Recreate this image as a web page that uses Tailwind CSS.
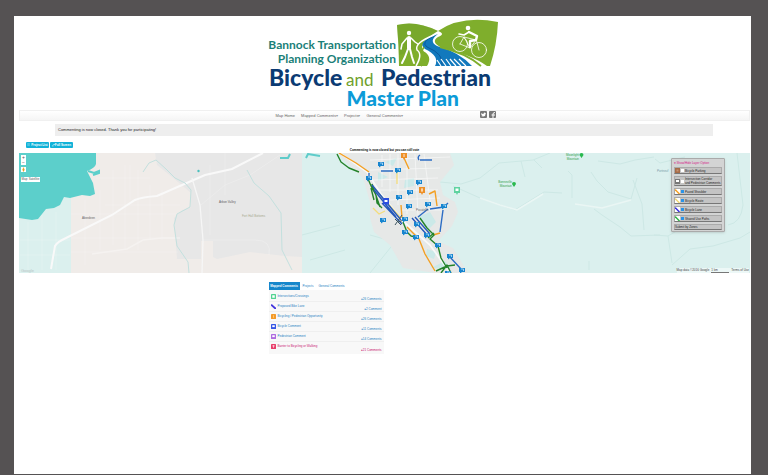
<!DOCTYPE html>
<html lang="en">

<head>
    <meta charset="utf-8">
    <meta name="viewport" content="width=device-width, initial-scale=1">
    <title>Bicycle and Pedestrian Master Plan</title>
    <script src="https://cdn.jsdelivr.net/npm/@tailwindcss/browser@4"></script>
</head>

<body class="min-h-screen flex flex-col bg-[#555253] pt-4 pl-[14px] pr-[17px] pb-px font-['Liberation_Sans',Arial,sans-serif] text-[#444]">
    <div class="grow bg-white px-[5px] pr-px">
        <!-- Logo -->
        <header class="flex justify-center pt-[2px] pr-px">
            <a href="#" aria-label="Bicycle and Pedestrian Master Plan">
                <svg class="w-[236px] h-[92px]" viewBox="266 18 236 92" font-family="Lato,'Open Sans',sans-serif">
                    <path d="M397 25Q416 20 438 31Q462 15 498 22Q497 45 490 66H399Q399 45 397 25Z" fill="#7fae2c" />
                    <path d="M397 25Q416 20 438 31Q424 38 412 52L399 55Z" fill="#6f9f2b" opacity=".4" />
                    <!-- river and paths -->
                    <path d="M438 31Q446 34 438 37Q430 42 442 48Q472 55 487 66H427Q433 56 423 51Q418 43 438 31Z" fill="#fff" />
                    <path d="M438 34Q416 42 425 49Q440 56 435 66H472Q459 52 437 46Q428 41 438 34Z" fill="#1279bd" />
                    <path d="M434 36Q420 42 427 47Q444 54 442 65" fill="none" stroke="#0c5a9d" />
                    <path d="M441 66L437 60M446 66L441 59M451 66L446 59M456 66L450 59M461 66L454 59M466 66L459 59" stroke="#fff" stroke-width="1.2" />
                    <path d="M440 47Q466 53 481 66M424 47Q420 52 426 55Q427 60 421 66" fill="none" stroke="#7fae2c" stroke-width="1.8" />
                    <path d="M434 35Q414 43 417 50Q423 54 416 66" fill="none" stroke="#fff" stroke-width="1.5" />
                    <!-- walker -->
                    <g fill="none" stroke="#fff" stroke-linecap="round" stroke-linejoin="round">
                        <circle cx="409" cy="33" r="2.2" fill="#fff" stroke="none" />
                        <path d="M409 38L409 48" stroke-width="4" />
                        <path d="M407 38L402 44L401 49M411 38L415 42L418 44" stroke-width="1.5" />
                        <path d="M408 49L405 57L402 63M410 49L412 57L414 63" stroke-width="2" />
                    </g>
                    <!-- cyclist -->
                    <g fill="none" stroke="#fff" stroke-linecap="round" stroke-linejoin="round">
                        <circle cx="460" cy="44" r="7.5" stroke-width=".8" />
                        <circle cx="479" cy="50" r="7.5" stroke-width=".8" />
                        <path d="M460 44L464 37L476 40L470 48L460 44M464 37L470 48M476 39L479 50" stroke-width=".8" />
                        <circle cx="468" cy="28" r="2.3" fill="#fff" stroke="none" />
                        <path d="M469 32L477 36L476 40L470 41L470 47" stroke-width="2.4" />
                        <path d="M469 32L464 35L459 34" stroke-width="1.6" />
                    </g>
                    <g fill="#1b7f78" font-size="12" font-weight="700" text-anchor="end">
                        <text x="396" y="49">Bannock Transportation</text>
                        <text x="396" y="63">Planning Organization</text>
                    </g>
                    <g font-weight="900">
                        <text x="269" y="86" fill="#0b3b73" font-size="23">Bicycle</text>
                        <text x="346" y="86" fill="#6fa02c" font-size="17" font-weight="400">and</text>
                        <text x="491" y="86" fill="#0b3b73" text-anchor="end" font-size="23">Pedestrian</text>
                        <text x="459" y="106" fill="#0c9bd8" text-anchor="end" font-size="21">Master Plan</text>
                    </g>
                </svg>
            </a>
        </header>

        <!-- Main nav -->
        <nav class="flex justify-center h-[11px] border border-[#f0f0f0] bg-linear-to-b from-white to-[#f5f5f5] text-[4px] leading-[9px] text-[#666]">
            <div class="w-[222px] pl-[2px] flex gap-[6px] items-center">
                <a href="#">Map Home</a>
                <a href="#">Mapped Comments<span class="text-[#999]">▾</span></a>
                <a href="#">Projects<span class="text-[#999]">▾</span></a>
                <a href="#">General Comments<span class="text-[#999]">▾</span></a>
                <div class="ml-auto flex gap-[2px] -mt-[3px]">
                    <a href="#" aria-label="Twitter">
                        <svg class="size-[7px]" viewBox="0 0 14 14"><rect width="14" height="14" rx="2" fill="#777" /><path d="M2 4Q4 6 7 6Q7 3 9 3L11 4L12 4L11 6Q11 11 6 11L2 10L5 9L3 8Z" fill="#fff" /></svg>
                    </a>
                    <a href="#" aria-label="Facebook">
                        <svg class="size-[7px]" viewBox="0 0 14 14"><rect width="14" height="14" rx="2" fill="#777" /><path d="M8 14V6Q8 3 12 3M5 8H12" fill="none" stroke="#fff" stroke-width="2" /></svg>
                    </a>
                </div>
            </div>
        </nav>

        <p class="mt-[3px] ml-9 mr-[37px] h-3 px-[3px] bg-[#eee] text-[4px] leading-3 text-[#222]">Commenting is now closed. Thank you for participating!</p>

        <div class="mt-[6px] ml-[7px] flex gap-px text-[3px] leading-[6px] font-bold text-white">
            <button class="w-[23px] h-[6px] rounded-[1px] bg-[#11b2d8]">☷ Project List</button>
            <button class="w-[23px] h-[6px] rounded-[1px] bg-[#11b2d8]">⤢ Full Screen</button>
        </div>
        <p class="h-[5px] text-center text-[3px] leading-[5px] font-bold text-black">Commenting is now closed but you can still vote</p>

        <!-- Map -->
        <section class="relative h-[120px] overflow-hidden bg-[#dbf0ee]">
            <svg class="w-full h-full" viewBox="19 153 731 120" preserveAspectRatio="xMidYMid slice" font-family="'Liberation Sans',Arial,sans-serif">
                <defs>
                    <g id="pin">
                        <path d="M-3-2H3V2H0L-2 3.500V2H-3Z" fill="#1785cf" />
                        <path d="M-1 -1H1.500V1" fill="none" stroke="#bfe1f7" stroke-width=".8" />
                    </g>
                </defs>
                <rect x="71" y="153" width="231" height="120" fill="#f0ece9" />
                <path d="M19 153H96V197L71 205L19 218Z" fill="#f0ece9" />
                <path d="M155 153H302V257L285 256L250 252L217 259L213 257V241H201V259H194L177 259L174 218L182 210L191 207V193L172 177L157 165Z" fill="#e7e7e7" />
                <path d="M71 190V273H19V210Z" fill="#dbf0ee" />
                <path d="M19 153H96V164Q95 168 87 171L93 183L95 194L90 196L82 195L70 198L64 197L60 205L54 208L46 209L38 219L32 220L19 218Z" fill="#5ccfcb" />
                <path d="M88 171L94 173L99 171L99 173L93 175" fill="none" stroke="#5ccfcb" stroke-width="2" />
                <!-- streets -->
                <g fill="none" stroke="#fff" opacity=".35" stroke-width=".6">
                    <path d="M71 214H176M71 238H175M71 252H178M100 190V250M113 170V245M125 165V250M138 170V250M150 185V240M162 190V240M85 200V265M105 205H180M96 178H150M130 165V200M204 240H255Q272 240 269 255M201 205L225 185L250 175L280 155M225 153V195M210 165V235" />
                    <path d="M20 240H70M28 222V270M42 215V270M56 212V270M20 255H70" />
                    <path d="M143 240L162 238H180M92 254L127 249L143 240" stroke-width="1.500" />
                </g>
                <path d="M51 269L55 246Q57 242 66 238L112 215L135 200Q142 197 157 196L205 175L232 169L263 153" fill="none" stroke="#f9f9f9" stroke-width="2" />
                <path d="M192 178L200 205L203 240L202 273" fill="none" stroke="#f6f6f6" stroke-width="1.300" />
                <!-- rivers -->
                <g fill="none" stroke="#c3e0de" stroke-width="1">
                    <path d="M143 172L149 163L156 160L166 169L175 178L185 183L191 190L190 207L177 214L174 225L177 246L188 262L189 273" />
                    <path d="M247 170L254 183L269 196L281 213L282 250L292 270" />
                </g>
                <path d="M280 158H288L290 154M306 158L308 154L320 156" fill="none" stroke="#5fccca" stroke-width="2" />
                <circle cx="198.500" cy="171" r="1.200" fill="#4cc0bd" />
                <!-- hills -->
                <g fill="none" stroke="#cde8e5" stroke-width="1">
                    <path d="M440 182L461 184L480 178L499 163L533 160L550 153M521 161L525 177M534 160L542 168M568 171L572 175V198M598 161L620 164L635 160L654 157M591 172L597 181L608 192L631 199L637 178M594 209L602 215L620 227L631 236L660 235M453 186L480 198L515 210L544 192L562 193" />
                    <path d="M633 180L642 204L644 230M654 235L668 236L672 263M668 236L685 226L725 222M690 249L713 246L740 238L750 232M672 265L690 249M737 153L743 205Q741 223 728 225M589 270V261M370 273L395 242L370 235M302 235L340 225M310 260L345 250M655 159L660 163L685 157" />
                </g>
                <path d="M480 198L500 205L517 210L543 194M575 204L602 208L631 200" fill="none" stroke="#eaf6f4" stroke-width="1.500" />
                <!-- city -->
                <path d="M338 153H450L454 165L440 182L443 195L455 202L458 212L452 226L438 241L453 248L468 273H435L403 268L390 245L374 232L370 218V202L363 178L342 158Z" fill="#e6e8e7" />
                <path d="M418 217L430 212L436 222L428 230ZM427 249L436 252L434 259L426 256ZM431 268L445 261L451 269ZM405 180L414 178L414 186L404 188ZM378 172L388 177L378 181ZM385 162L397 158L393 166Z" fill="#cbe9e8" />
                <g fill="none" stroke="#fff" stroke-width=".7" opacity=".75">
                    <path d="M370 160L450 157M370 170L440 168M373 180L438 178M378 190L438 190M390 200L440 198M402 210L443 210M382 155V187M390 154V192M398 154V205M407 154V214M415 154L418 215M424 154L431 208" />
                    <path d="M340 153L367 172L381 194L404 222L430 245L450 273" stroke-width="1.800" />
                </g>
                <path d="M397 172V184M372 186L400 217M373 208L379 214L385 211" fill="none" stroke="#f4dc7b" stroke-width="1.300" />
                <!-- bike routes -->
                <g fill="none" stroke-width="1.400" stroke-linejoin="round">
                    <path d="M339 153L356 163L369 172M404 158L409 169M429 194L435 191L437 206M407 227L419 239L425 254L435 271M401 205L402 218M433 235L440 233" stroke="#f3a024" />
                    <path d="M337 154L341 162L349 168L359 172M368 179L372 188L376 195L377 203L382 208M371 188L374 200M372 184L380 207M403 222L407 232L411 236L416 237M420 218L427 228L434 235L430 239L438 246L441 258L447 268M436 271L447 266L455 265M441 273L447 265L451 273M428 238L434 233" stroke="#24832b" />
                    <path d="M381 171H393M420 160H432M369 173L369 180M418 217L428 209M430 209L444 207L448 203M443 210L440 232M449 256L461 269" stroke="#2c6cc4" />
                    <path d="M372 185L401 220M382 203L402 224M374 190L396 217M412 218L428 236M415 217L430 234" stroke="#2458ba" />
                    <path d="M420 155Q417 157 419 160" stroke="#2c6cc4" />
                    <path d="M395 219L401 225M395 225L402 215M398 222L404 220" stroke="#3b5560" stroke-width="1" />
                </g>
                <!-- comment pins -->
                <use href="#pin" x="381" y="164" /><use href="#pin" x="398" y="170" /><use href="#pin" x="369" y="178" />
                <use href="#pin" x="419" y="182" /><use href="#pin" x="410" y="192" /><use href="#pin" x="399" y="197" />
                <use href="#pin" x="409" y="206" /><use href="#pin" x="428" y="204" /><use href="#pin" x="444" y="206" />
                <use href="#pin" x="383" y="220" /><use href="#pin" x="405" y="219" /><use href="#pin" x="405" y="232" />
                <use href="#pin" x="417" y="224" /><use href="#pin" x="416" y="237" /><use href="#pin" x="427" y="235" />
                <use href="#pin" x="438" y="245" /><use href="#pin" x="450" y="256" /><use href="#pin" x="462" y="270" />
                <use href="#pin" x="448" y="273" />
                <path d="M401 153H407V158H405L404 160L403 158H401ZM419 187H425V193H423L422 195L421 193H419Z" fill="#ee9027" />
                <path d="M404 154V157M422 188V192M421 190H423" stroke="#fff" stroke-width=".8" />
                <path d="M383 198H389V204H387L386 206L385 204H383Z" fill="#2b4fe0" />
                <path d="M384.500 200H387.500V202H384.500Z" fill="#fff" />
                <path d="M454 187H460V193H458L457 195L456 193H454Z" fill="#5fd3a0" />
                <path d="M455.500 188.500H458.500V191H455.500Z" fill="#fff" />
                <g font-size="3" fill="#666">
                    <text x="82" y="219">Aberdeen</text>
                    <text x="219" y="203">Arbon Valley</text>
                    <text x="242" y="217" fill="#a8aa90">Fort Hall Bottoms</text>
                    <text x="416" y="211">Pocatello</text>
                    <g fill="#35a24f" text-anchor="end">
                        <text x="512" y="183">Bonneville</text>
                        <text x="512" y="187">Mountain</text>
                        <text x="579" y="156">Moonlight</text>
                        <text x="579" y="160">Mountain</text>
                    </g>
                    <text x="657" y="172" fill="#7a9aa8">Portneuf</text>
                </g>
                <path d="M512 184a2 2 0 1 1 4 0L514 187ZM579.500 155a2 2 0 1 1 4 0L581.500 158Z" fill="#29b94f" />
            </svg>

            <!-- Zoom and type controls -->
            <div class="absolute left-[2px] top-[2px] flex flex-col items-start gap-[2px] text-[3px] text-[#555]">
                <div class="flex flex-col bg-white text-[5px] leading-[5px]">
                    <button class="size-[5px]" aria-label="Zoom in">+</button>
                    <button class="size-[5px]" aria-label="Zoom out">−</button>
                </div>
                <button class="size-[5px] bg-white" aria-label="Street View">
                    <svg class="size-[5px]" viewBox="0 0 10 10"><circle cx="5" cy="2.500" r="1.500" fill="#e8a021" /><path d="M3 4H7V7H6V9H4V7H3Z" fill="#e8a021" /></svg>
                </button>
                <div class="mt-[3px] flex h-[5px] bg-white leading-[5px]">
                    <button class="w-[7px]">Map</button>
                    <button class="w-[12px]">Satellite</button>
                </div>
            </div>

            <!-- Layer list -->
            <div class="absolute right-[25px] top-[5px] w-[54px] px-[2px] pt-[2px] pb-px flex flex-col gap-[2px] rounded-[1px] border border-[#aaa] bg-[#d3d4d4] text-[3px] leading-[4px] text-[#222] shadow-sm">
                <a href="#" class="leading-[4px] text-[#d6198a]">♥ Show/Hide Layer Option</a>
                <label class="flex h-[7px] items-center gap-px border border-[#aaa] border-b-[#777] bg-[#c4c4c4]">
                    <svg class="size-[5px] shrink-0" viewBox="0 0 10 10"><rect width="10" height="10" fill="#a66b47" /><path d="M3 3H7V7H3Z" fill="#c79273" /></svg>
                    <input type="checkbox" class="appearance-none size-[3px] shrink-0 bg-white">Bicycle Parking
                </label>
                <label class="flex h-[10px] items-center gap-px border border-[#aaa] border-b-[#777] bg-[#c4c4c4]">
                    <svg class="size-[5px] shrink-0" viewBox="0 0 10 10"><rect width="10" height="10" fill="#777" /><path d="M2 2H8V6H2Z" fill="#fff" /></svg>
                    <input type="checkbox" class="appearance-none size-[3px] shrink-0 bg-white"><span class="whitespace-nowrap">Intersection Corridor<br>and Pedestrian Comments</span>
                </label>
                <label class="flex h-[7px] items-center gap-px border border-[#aaa] border-b-[#777] bg-[#c4c4c4]">
                    <svg class="size-[5px] shrink-0" viewBox="0 0 10 10"><rect width="10" height="10" fill="#fff" /><path d="M0 1L9 10" stroke="#f3a024" stroke-width="3" /></svg>
                    <input type="checkbox" checked class="appearance-none size-[3px] shrink-0 bg-white checked:bg-[#2a93e8]">Paved Shoulder
                </label>
                <label class="flex h-[7px] items-center gap-px border border-[#aaa] border-b-[#777] bg-[#c4c4c4]">
                    <svg class="size-[5px] shrink-0" viewBox="0 0 10 10"><rect width="10" height="10" fill="#fff" /><path d="M0 1L9 10" stroke="#f2d975" stroke-width="3" /></svg>
                    <input type="checkbox" checked class="appearance-none size-[3px] shrink-0 bg-white checked:bg-[#2a93e8]">Bicycle Route
                </label>
                <label class="flex h-[7px] items-center gap-px border border-[#aaa] border-b-[#777] bg-[#c4c4c4]">
                    <svg class="size-[5px] shrink-0" viewBox="0 0 10 10"><rect width="10" height="10" fill="#fff" /><path d="M0 1L9 10" stroke="#3a2fe0" stroke-width="3" /></svg>
                    <input type="checkbox" checked class="appearance-none size-[3px] shrink-0 bg-white checked:bg-[#2a93e8]">Bicycle Lane
                </label>
                <label class="flex h-[7px] items-center gap-px border border-[#aaa] border-b-[#777] bg-[#c4c4c4]">
                    <svg class="size-[5px] shrink-0" viewBox="0 0 10 10"><rect width="10" height="10" fill="#fff" /><path d="M0 1L9 10" stroke="#2fb344" stroke-width="3" /></svg>
                    <input type="checkbox" checked class="appearance-none size-[3px] shrink-0 bg-white checked:bg-[#2a93e8]">Shared Use Paths
                </label>
                <button class="h-[6px] border border-[#aaa] border-b-[#777] bg-[#c4c4c4] text-left">Submit by Zones</button>
            </div>

            <div class="absolute right-px bottom-0 flex gap-[2px] bg-white/50 text-[3px] leading-[4px] text-[#444]">
                <span>Map data ©2016 Google</span>
                <span class="w-[18px] border-b border-[#777]">1 km</span>
                <a href="#">Terms of Use</a>
            </div>
            <span class="absolute left-[2px] bottom-0 text-[4px] leading-[5px] text-[#b8c4c3]">Google</span>
        </section>

        <!-- Comments -->
        <main class="mx-auto mt-[9px] w-[232px] text-[3px] leading-[4px] text-[#2580c3]">
            <div class="flex h-2">
                <button class="w-[31px] bg-[#1687cb] font-bold text-white">Mapped Comments</button>
                <button class="w-[17px]">Projects</button>
                <button class="w-[30px]">General Comments</button>
            </div>
            <ul class="w-[115px] bg-[#f8f8f8] py-[2px] divide-y divide-[#efefef]">
                <li class="flex h-[10px] gap-[2px] px-[2px] pt-[2px]">
                    <svg class="size-[5px]" viewBox="0 0 8 8"><rect width="8" height="8" rx="1" fill="#54d391" /><path d="M2 2H6V6H2Z" fill="#fff" /></svg>
                    <a href="#">Intersections/Crossings</a>
                    <a href="#" class="ml-auto self-end">●26 Comments</a>
                </li>
                <li class="flex h-[10px] gap-[2px] px-[2px] pt-[2px]">
                    <svg class="size-[5px]" viewBox="0 0 8 8"><path d="M0 1L8 8" stroke="#4034dc" stroke-width="3" /></svg>
                    <a href="#">Proposed Bike Lane</a>
                    <a href="#" class="ml-auto self-end">●2 Comment</a>
                </li>
                <li class="flex h-[10px] gap-[2px] px-[2px] pt-[2px]">
                    <svg class="size-[5px]" viewBox="0 0 8 8"><rect width="8" height="8" rx="1" fill="#f39a28" /><path d="M4 2V6" stroke="#ffe0b0" /></svg>
                    <a href="#">Bicycling / Pedestrian Opportunity</a>
                    <a href="#" class="ml-auto self-end">●26 Comments</a>
                </li>
                <li class="flex h-[10px] gap-[2px] px-[2px] pt-[2px]">
                    <svg class="size-[5px]" viewBox="0 0 8 8"><rect width="8" height="8" rx="1" fill="#3455e5" /><path d="M2 2H6V5H2Z" fill="#fff" /></svg>
                    <a href="#">Bicycle Comment</a>
                    <a href="#" class="ml-auto self-end">●11 Comments</a>
                </li>
                <li class="flex h-[10px] gap-[2px] px-[2px] pt-[2px]">
                    <svg class="size-[5px]" viewBox="0 0 8 8"><rect width="8" height="8" rx="1" fill="#ae6be0" /><path d="M2 2H6V5H2Z" fill="#fff" /></svg>
                    <a href="#">Pedestrian Comment</a>
                    <a href="#" class="ml-auto self-end">●14 Comments</a>
                </li>
                <li class="flex h-[10px] gap-[2px] px-[2px] pt-[2px] text-[#c9146f]">
                    <svg class="size-[5px]" viewBox="0 0 8 8"><rect width="8" height="8" rx="1" fill="#e83d6a" /><path d="M2 3H6M4 2V6" stroke="#fff" /></svg>
                    <a href="#">Barrier to Bicycling or Walking</a>
                    <a href="#" class="ml-auto self-end">●21 Comments</a>
                </li>
            </ul>
        </main>
    </div>
</body>

</html>
